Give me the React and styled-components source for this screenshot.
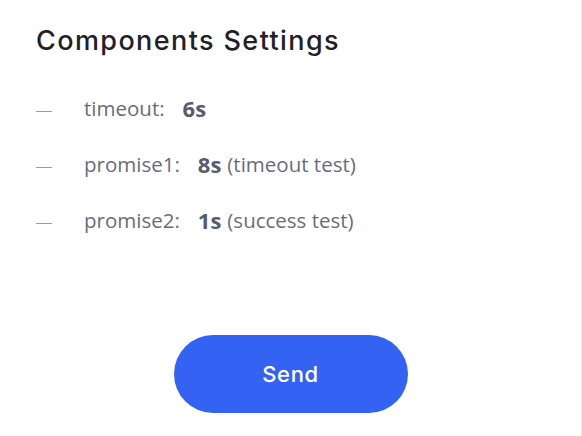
import React from "react";
import styled, { createGlobalStyle } from "styled-components";

const GlobalStyle = createGlobalStyle`
  html, body {
    margin: 0;
    padding: 0;
    background: #ffffff;
  }
  * {
    box-sizing: border-box;
  }
`;

const Panel = styled.div`
  width: 582px;
  height: 436px;
  background: #ffffff;
  border-right: 1px solid #ececec;
  padding: 24px 36px 0 36px;
  display: flex;
  flex-direction: column;
`;

const Title = styled.h2`
  margin: 0;
  font-family: Inter, "Open Sans", sans-serif;
  font-weight: 500;
  font-size: 27px;
  letter-spacing: 1.4px;
  line-height: 33px;
  color: #1f2128;
`;

const List = styled.ul`
  list-style: none;
  margin: 0;
  padding: 0;
  margin-top: 39px;
  display: flex;
  flex-direction: column;
  gap: 32px;
`;

const Row = styled.li`
  display: flex;
  align-items: center;
  height: 24px;
  font-family: "Open Sans", "Noto Sans", sans-serif;
  font-size: 20.5px;
  color: #6a6b7d;
`;

const Dash = styled.span`
  width: 16px;
  height: 1px;
  background: #9a9baa;
  margin-top: 6px;
  margin-right: 32px;
`;

const Label = styled.span`
  margin-right: 18px;
`;

const Value = styled.b`
  font-weight: 700;
  font-size: 22px;
  color: #585a6d;
  margin-right: 6px;
`;

const Footer = styled.div`
  display: flex;
  justify-content: center;
  margin-top: 103px;
  margin-left: -36px;
  margin-right: -36px;
`;

const SendButton = styled.button`
  width: 234px;
  height: 78px;
  border: none;
  border-radius: 39px;
  background: #3462f2;
  color: #ffffff;
  font-family: Inter, "Open Sans", sans-serif;
  font-weight: 500;
  font-size: 22px;
  letter-spacing: 0.6px;
  cursor: pointer;
`;

const settings = [
  { label: "timeout:", value: "6s", note: "" },
  { label: "promise1:", value: "8s", note: "(timeout test)" },
  { label: "promise2:", value: "1s", note: "(success test)" },
];

const App = () => (
  <>
    <GlobalStyle />
    <Panel>
      <Title>Components Settings</Title>
      <List>
        {settings.map((s) => (
          <Row key={s.label}>
            <Dash />
            <Label>{s.label}</Label>
            <Value>{s.value}</Value>
            {s.note}
          </Row>
        ))}
      </List>
      <Footer>
        <SendButton>Send</SendButton>
      </Footer>
    </Panel>
  </>
);

export default App;
